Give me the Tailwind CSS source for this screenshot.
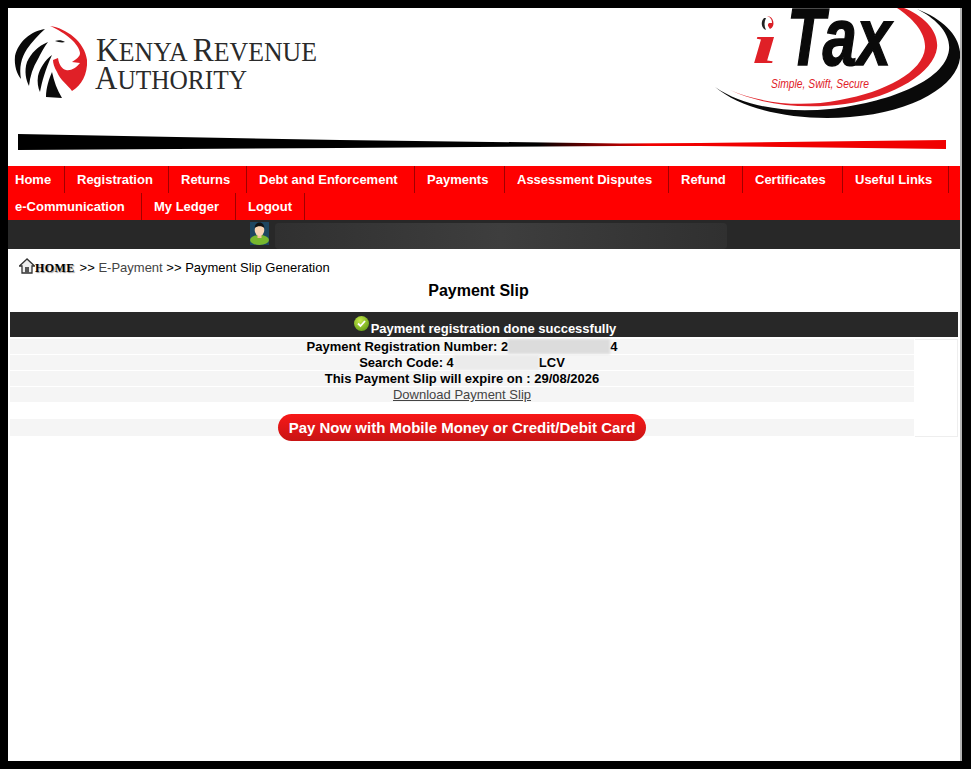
<!DOCTYPE html>
<html>
<head>
<meta charset="utf-8">
<title>iTax Payment Slip</title>
<script src="https://cdn.jsdelivr.net/npm/@tailwindcss/browser@4"></script>
</head>
<body class="bg-black font-['Liberation_Sans',Arial,sans-serif] overflow-hidden">
<div class="h-[769px] pt-2 pl-2 pr-[9px] pb-2">
<div class="h-[753px] bg-white border-r-2 border-[#b4b4b4] overflow-hidden">
  <header class="h-[158px] relative">
    <div class="flex justify-between h-[125px]">
      <svg class="w-[320px] h-[125px] shrink-0" viewBox="8 8 320 125">
        <path d="M50 26 C66 28 85 42 87 60 C88 74 81 86 72 91 C68 85 60 80 57 72 C54 67 53 63 53 60 L58 58 C59 65 62 69 66 70 C71 71 76 68 80 63 L72 62 C76 59 80 57 80 53 C79 44 66 33 50 26Z" fill="#e02027"/>
        <path d="M55 41 C58 40 62 40 65 42 C62 43 58 42 55 41Z" fill="#111"/>
        <path d="M45 29 C31 31 18 42 15 56 C14 66 17 74 21 79 C19 68 21 58 27 49 C32 42 38 35 45 29Z" fill="#0a0a0a"/>
        <path d="M48 42 C38 46 31 53 27 62 C24 71 26 80 29 86 C30 76 33 67 38 59 C41 53 44 47 48 42Z" fill="#0a0a0a"/>
        <path d="M52 55 C45 60 40 68 38 76 C37 82 38 88 40 92 C42 82 45 70 52 55Z" fill="#0a0a0a"/>
        <path d="M52 72 C49 79 46 88 46 97 L62 98 C57 90 54 81 52 72Z" fill="#0a0a0a"/>
        <text x="96" y="61" font-family="Liberation Serif" font-size="27" fill="#2a2a2a" textLength="221" lengthAdjust="spacingAndGlyphs"><tspan font-size="33">K</tspan>ENYA <tspan font-size="33">R</tspan>EVENUE</text>
        <text x="95" y="89" font-family="Liberation Serif" font-size="27" fill="#2a2a2a" textLength="152" lengthAdjust="spacingAndGlyphs"><tspan font-size="33">A</tspan>UTHORITY</text>
      </svg>
      <svg class="w-[250px] h-[125px] shrink-0" viewBox="710 8 250 125">
        <path d="M715 87 C745 108 790 113 830 109 C885 103 945 82 949 50 C951 33 935 18 917 9 C945 20 962 38 960 58 C957 85 915 112 850 117 C800 121 745 112 715 87Z" fill="#0a0a0a"/>
        <path d="M730 90 C760 103 800 108 840 100 C885 92 923 72 925 48 C926 32 912 18 897 8 L904 8 C922 15 939 30 937 48 C934 72 895 97 845 104 C800 110 760 104 730 90Z" fill="#e02027"/>
        <text x="787" y="65" font-family="Liberation Sans" font-weight="700" font-style="italic" font-size="82" fill="#0a0a0a" stroke="#0a0a0a" stroke-width="1.5" textLength="104" lengthAdjust="spacingAndGlyphs">Tax</text>
        <text x="752" y="63" font-family="Liberation Serif" font-weight="700" font-style="italic" font-size="58" fill="#e02027" textLength="26" lengthAdjust="spacingAndGlyphs">ı</text>
        <circle cx="767" cy="23" r="7" fill="#fff"/>
        <path d="M767 16 A7 7 0 0 1 770 29 C768 26 767 25 769 23 L772 23 C772 19 770 17 767 16Z" fill="#d92027"/>
        <path d="M764 18 C761 21 761 26 764 29 L766 30 C764 26 764 22 766 18Z" fill="#222"/>
        <text x="771" y="88" font-family="Liberation Sans" font-style="italic" font-size="12.5" fill="#e02027" textLength="98" lengthAdjust="spacingAndGlyphs">Simple, Swift, Secure</text>
      </svg>
    </div>
    <svg class="block w-[952px] h-[33px]" viewBox="8 133 952 33">
      <defs>
        <linearGradient id="wedge" x1="0" y1="0" x2="1" y2="0">
          <stop offset="0.56" stop-color="#000"/>
          <stop offset="0.68" stop-color="#f00000"/>
          <stop offset="1" stop-color="#f00000"/>
        </linearGradient>
      </defs>
      <polygon points="18,134 340,140 620,143.5 700,143 946,140 946,149 700,146 620,146 340,148 18,150" fill="url(#wedge)"/>
    </svg>
  </header>

  <nav class="bg-[#ff0000] h-[54px] text-[13px] font-bold leading-[27px] text-white">
    <ul class="flex h-[27px]">
      <li class="w-[57px] pl-[7px] border-r border-[#a00000]">Home</li>
      <li class="w-[104px] pl-3 border-r border-[#a00000]">Registration</li>
      <li class="w-[78px] pl-3 border-r border-[#a00000]">Returns</li>
      <li class="w-[168px] pl-3 border-r border-[#a00000]">Debt and Enforcement</li>
      <li class="w-[90px] pl-3 border-r border-[#a00000]">Payments</li>
      <li class="w-[164px] pl-3 border-r border-[#a00000]">Assessment Disputes</li>
      <li class="w-[74px] pl-3 border-r border-[#a00000]">Refund</li>
      <li class="w-[100px] pl-3 border-r border-[#a00000]">Certificates</li>
      <li class="w-[106px] pl-3 border-r border-[#a00000]">Useful Links</li>
    </ul>
    <ul class="flex h-[27px]">
      <li class="w-[134px] pl-[7px] border-r border-[#a00000]">e-Communication</li>
      <li class="w-[94px] pl-3 border-r border-[#a00000]">My Ledger</li>
      <li class="w-[69px] pl-3 border-r border-[#a00000]">Logout</li>
    </ul>
  </nav>

  <div class="bg-[#282828] h-[29px] flex pl-[242px] pt-[2px]">
    <svg class="w-[19px] h-[23px] shrink-0" viewBox="0 0 19 23">
      <rect width="19" height="23" fill="#1e4660"/>
      <ellipse cx="9.5" cy="18" rx="9.5" ry="5" fill="#78b82e"/>
      <rect x="7.5" y="11" width="4" height="5" fill="#f0c09a"/>
      <ellipse cx="9.5" cy="8" rx="4.8" ry="6" fill="#fbd5b5"/>
      <path d="M4.7 6 C4.7 2 7.5 0.5 9.5 0.5 C11.5 0.5 14.3 2 14.3 6 C12 3.8 7.5 3.8 4.7 6Z" fill="#111"/>
    </svg>
    <div class="ml-[6px] w-[452px] mt-px h-[26px] rounded-sm bg-gradient-to-r from-[#303030] via-[#3e3e3e] to-[#303030]"></div>
  </div>

  <div class="flex items-end h-[27px] pl-[11px] text-[13px] text-black">
    <svg class="w-[16px] h-[17px] mb-[1px] shrink-0" viewBox="0 0 16 17">
      <path d="M8 1 L0.5 8 L3 8 L3 15 L13 15 L13 8 L15.5 8 Z" fill="#eee" stroke="#333" stroke-width="1.3"/>
      <rect x="6" y="9" width="4" height="6" fill="#555"/>
    </svg>
    <span class="font-['Liberation_Serif',serif] font-bold text-[12px] tracking-[0.4px] [text-shadow:1px_1px_1px_#999] mb-[-1px]">HOME</span>
    <span class="ml-[5px] mb-[-1px]">&gt;&gt; <span class="text-[#444]">E-Payment</span> &gt;&gt; Payment Slip Generation</span>
  </div>

  <h1 class="text-base font-bold text-center leading-5 mt-[5px] mb-[11px] text-black pr-[11px]">Payment Slip</h1>

  <div class="mx-[2px] w-[948px]">
    <div class="bg-[#282828] h-[25px] flex justify-center items-end text-white text-[13px] font-bold leading-[17px] pl-[2px]">
      <svg class="w-[15px] h-[15px] mb-[6px] mr-[2px] shrink-0" viewBox="0 0 15 15">
        <defs>
          <radialGradient id="ok" cx="0.4" cy="0.3" r="0.8">
            <stop offset="0" stop-color="#c6e84a"/>
            <stop offset="1" stop-color="#5f9a14"/>
          </radialGradient>
        </defs>
        <circle cx="7.5" cy="7.5" r="7.5" fill="url(#ok)"/>
        <path d="M4 7.5 L6.5 10 L11 5" fill="none" stroke="#fff" stroke-width="1.8"/>
      </svg>
      <span>Payment registration done successfully</span>
    </div>

    <div class="flex mt-[2px]">
      <div class="w-[904px] text-[13px] font-bold text-center text-black leading-[15px]">
        <div class="bg-[#f5f5f5] h-[15px] mb-px">Payment Registration Number: 2<span class="inline-block align-top w-[102px] h-[15px] bg-[#dcdcdc] blur-[1px]"></span>4</div>
        <div class="bg-[#f5f5f5] h-[15px] mb-px">Search Code: 4<span class="inline-block align-top w-[85px] h-[15px] bg-[#ebebeb] blur-[1px]"></span>LCV</div>
        <div class="bg-[#f5f5f5] h-[15px] mb-px">This Payment Slip will expire on : 29/08/2026</div>
        <div class="bg-[#f5f5f5] h-[15px] font-normal text-[#444] underline">Download Payment Slip</div>
        <div class="h-[17px]"></div>
        <div class="bg-[#f5f5f5] h-[17px] relative">
          <a class="absolute left-[268px] top-[-5px] w-[368px] h-[27px] rounded-[14px] bg-gradient-to-b from-[#f81818] to-[#c81414] text-white text-[15px] font-bold leading-[27px] text-center">Pay Now with Mobile Money or Credit/Debit Card</a>
        </div>
      </div>
      <div class="ml-px w-[43px] h-[98px] border-r border-b border-t border-[#eeeeee]"></div>
    </div>
  </div>
</div>
</div>
</body>
</html>
